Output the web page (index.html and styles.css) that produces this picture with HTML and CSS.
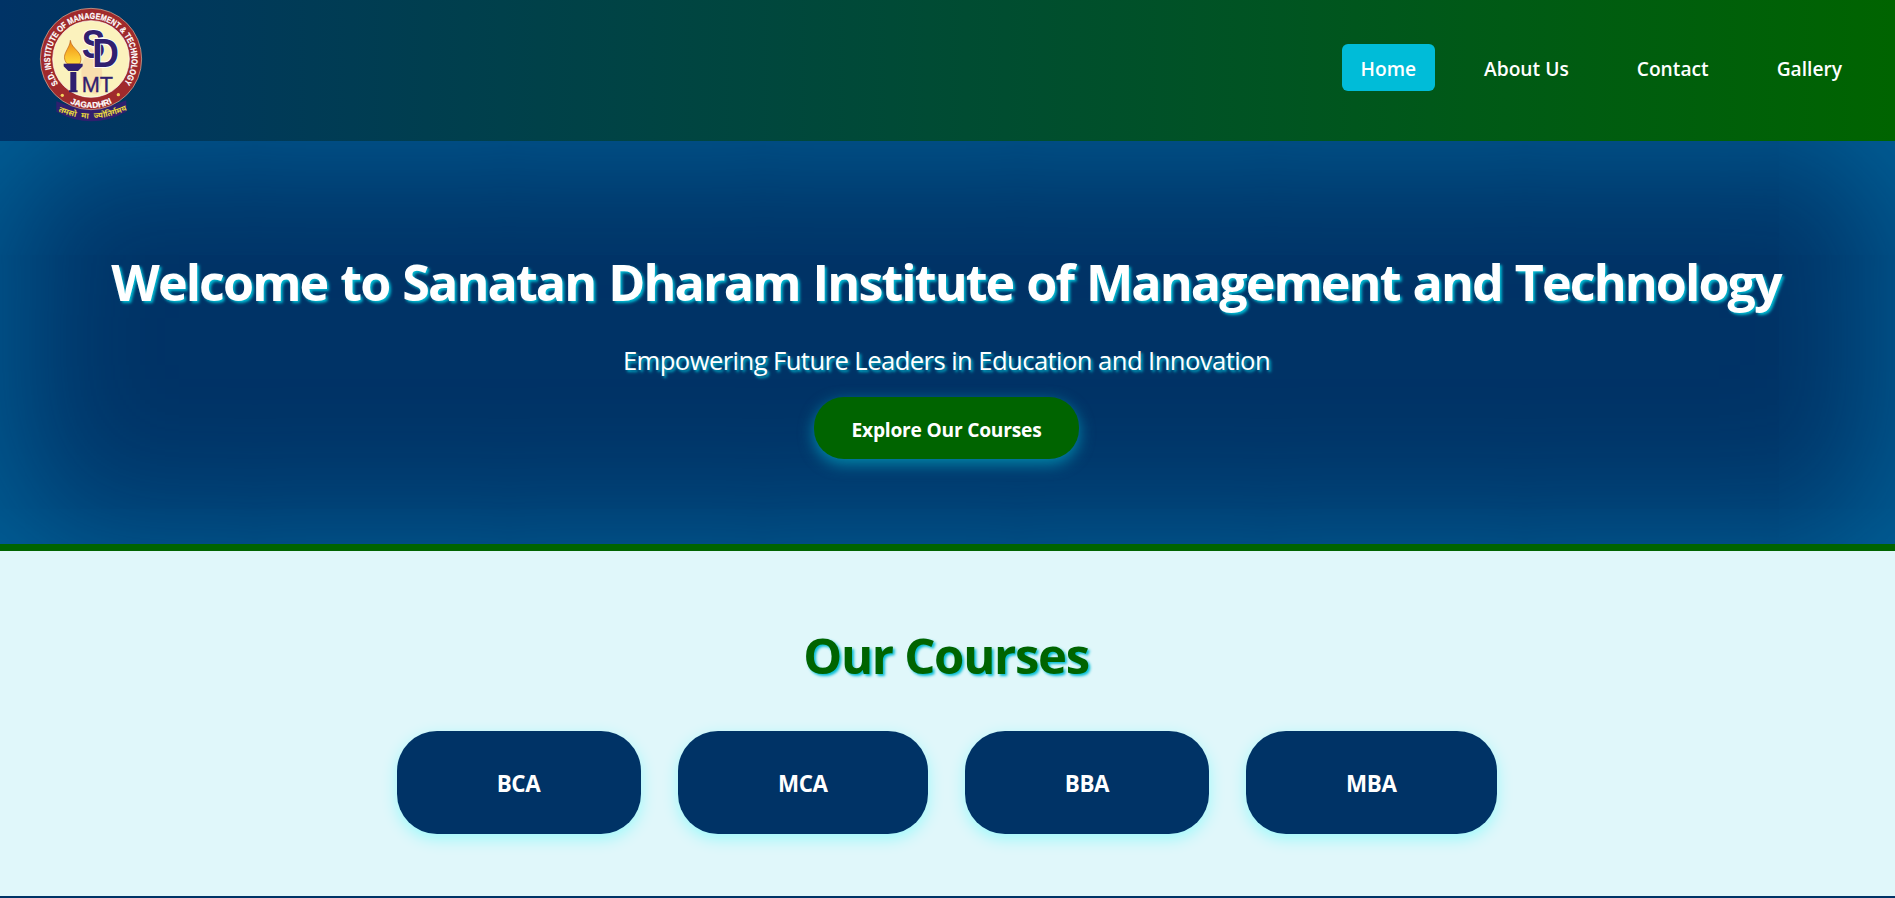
FILE: index.html
```html
<!DOCTYPE html>
<html lang="en">
<head>
<meta charset="utf-8">
<title>Sanatan Dharam Institute of Management and Technology</title>
<link rel="stylesheet" href="styles.css">
</head>
<body>
<header class="site-header">
  <svg class="logo" viewBox="27 18 312 345" role="img" aria-label="Institute logo">
    <defs>
      <path id="ring-top" d="M85 248A122 122 0 1 1 281 248"/>
      <path id="ring-bottom" d="M103 297A147 147 0 0 0 263 297"/>
      <path id="ribbon-text" d="M84 331Q184 376 292 327"/>
      <linearGradient id="flame" x1="0" y1="0" x2="0" y2="1">
        <stop offset="0" stop-color="#f08a12"/>
        <stop offset="1" stop-color="#ffdc3c"/>
      </linearGradient>
    </defs>
    <path d="M79 301Q184 345 289 298L289 332Q184 390 79 332Z" fill="#30206f"/>
    <circle cx="183" cy="174" r="152" fill="#a02a2c" stroke="#d8b9a0" stroke-width="2"/>
    <circle cx="183" cy="174" r="115" fill="#fbf2bd" stroke="#fff" stroke-width="2"/>
    <path d="M182 140C222 172 226 240 200 280C150 275 136 195 182 140Z" fill="#f8d6a8" opacity=".7"/>
    <text class="ring" textLength="536" lengthAdjust="spacingAndGlyphs"><textPath href="#ring-top" textLength="536" lengthAdjust="spacingAndGlyphs">S.D. INSTITUTE OF MANAGEMENT &amp; TECHNOLOGY</textPath></text>
    <text class="ring ring-low"><textPath href="#ring-bottom" startOffset="50%">JAGADHRI</textPath></text>
    <circle cx="97" cy="283" r="5" fill="#f4d35e"/>
    <circle cx="265" cy="281" r="5" fill="#f4d35e"/>
    <path d="M121 118C124 145 164 153 150 188H111C90 162 119 146 121 118Z" fill="url(#flame)" stroke="#b65d1a" stroke-width="2"/>
    <path d="M101 188H158V196L144 210H115L101 196ZM121 213H139V268H143V274H117V268H121Z" fill="#30206f"/>
    <text class="mono" x="155" y="172" textLength="70" lengthAdjust="spacingAndGlyphs">S</text>
    <text class="mono" x="187" y="197" textLength="80" lengthAdjust="spacingAndGlyphs">D</text>
    <text class="mt" x="155" y="274" textLength="94" lengthAdjust="spacingAndGlyphs">MT</text>
    <text class="motto"><textPath href="#ribbon-text" startOffset="50%">तमसो मा ज्योतिर्गमय</textPath></text>
  </svg>
  <nav class="nav">
    <a class="nav-link active" href="#">Home</a>
    <a class="nav-link" href="#">About Us</a>
    <a class="nav-link" href="#">Contact</a>
    <a class="nav-link" href="#">Gallery</a>
  </nav>
</header>
<section class="hero">
  <h1>Welcome to Sanatan Dharam Institute of Management and Technology</h1>
  <p>Empowering Future Leaders in Education and Innovation</p>
  <a class="cta" href="#">Explore Our Courses</a>
</section>
<section class="courses">
  <h2>Our Courses</h2>
  <div class="cards">
    <a class="card" href="#">BCA</a>
    <a class="card wide" href="#">MCA</a>
    <a class="card" href="#">BBA</a>
    <a class="card wide" href="#">MBA</a>
  </div>
</section>
<footer class="footer"></footer>
</body>
</html>
```
FILE: styles.css
```css
* { box-sizing: border-box; margin: 0; padding: 0; }
body {
  height: 898px;
  overflow: hidden;
  font-family: "Segoe UI", "Open Sans", "Noto Sans", sans-serif;
  background: #e0f7fa;
}
a { color: #fff; text-decoration: none; white-space: nowrap; }
.site-header {
  height: 141px;
  padding: 7px 34px 0 39px;
  display: flex;
  justify-content: space-between;
  background: linear-gradient(90deg, #003366, #006400);
}
.logo { width: 104px; height: 115px; }
.ring { font: bold 26px "Liberation Sans", sans-serif; fill: #fff; stroke: #fff; stroke-width: .6px; }
.ring-low { font-size: 25px; text-anchor: middle; }
.mono { font: bold 122px "Liberation Sans", sans-serif; fill: #30206f; stroke: #fff; stroke-width: 5px; paint-order: stroke; }
.mt { font: 68px "Liberation Sans", sans-serif; fill: #30206f; stroke: #30206f; stroke-width: 1px; }
.motto { font: bold 24px "Noto Sans Devanagari", "Noto Sans", sans-serif; fill: #e8d83c; text-anchor: middle; word-spacing: 10px; }
.nav { display: flex; gap: 30px; padding-top: 37px; }
.nav-link {
  height: 47px;
  padding: 0 19px;
  border-radius: 6px;
  font-size: 19.2px;
  font-weight: 600;
  line-height: 50px;
}
.nav-link.active { background: #00bcd8; }
.hero {
  height: 410px;
  padding-top: 107px;
  display: flex;
  flex-direction: column;
  align-items: center;
  color: #fff;
  background: #003366;
  border-bottom: 7px solid #006400;
  box-shadow: inset 0 0 150px rgba(0, 191, 255, .4);
}
.hero h1 {
  margin-right: 3px;
  font-size: 50.2px;
  letter-spacing: -1.9px;
  word-spacing: 1.8px;
  line-height: 68px;
  white-space: nowrap;
  text-shadow: 2px 2px 3px #00bcd4;
}
.hero p {
  margin: 27px 2px 0 0;
  font-size: 25.6px;
  letter-spacing: -.56px;
  line-height: 36px;
  text-shadow: 2px 2px 3px #00bcd4;
}
.cta {
  width: 265px;
  height: 62px;
  margin: 18px 2px 0 0;
  border-radius: 30px;
  background: #006400;
  font-size: 19.2px;
  font-weight: 700;
  letter-spacing: -.22px;
  line-height: 66px;
  text-align: center;
  box-shadow: 0 5px 15px rgba(0, 188, 212, .6);
}
.courses { height: 345px; padding-top: 70px; text-align: center; }
.courses h2 {
  padding-right: 3px;
  color: #006400;
  font-size: 49px;
  letter-spacing: -1.3px;
  line-height: 68px;
  text-shadow: 2px 2px 3px #00bcd4;
}
.cards { display: flex; justify-content: center; gap: 37px; margin-top: 42px; padding-right: 2px; }
.card {
  width: 244px;
  height: 103px;
  border-radius: 40px;
  background: #003366;
  font-size: 22.4px;
  font-weight: 700;
  letter-spacing: -.4px;
  line-height: 105px;
  box-shadow: 0 5px 15px rgba(0, 255, 255, .3);
}
.card.wide { width: 250.5px; }
.footer { height: 2px; background: #003366; }
```
